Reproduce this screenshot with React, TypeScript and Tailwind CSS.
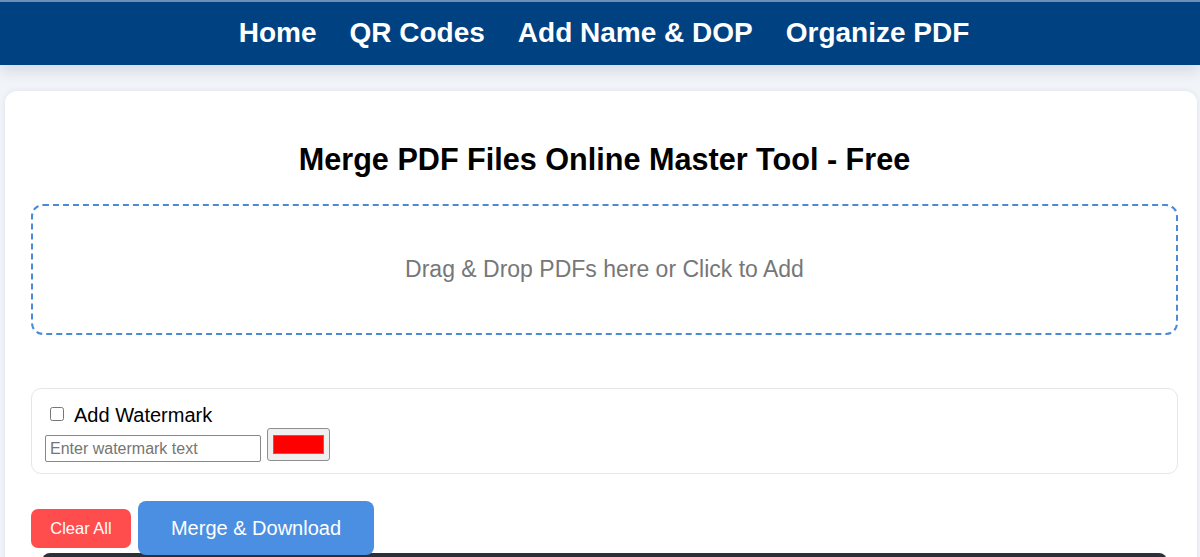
import React from 'react';

const navLinks = ['Home', 'QR Codes', 'Add Name & DOP', 'Organize PDF'];

export default function App() {
  return (
    <div className="min-h-screen bg-[#f1f4f8] font-['Liberation_Sans',Arial,sans-serif] overflow-hidden">
      {/* Header */}
      <header className="relative z-10 h-[65px] bg-[#004182] border-t-2 border-[#6f8fb8] shadow-[0_6px_14px_rgba(0,40,90,0.12)] flex items-center justify-center gap-[33px] pl-[8px]">
        {navLinks.map(link => (
          <a key={link} href="#" className="text-white text-[28px] font-bold leading-none -mt-[1px]">
            {link}
          </a>
        ))}
      </header>

      {/* Main card */}
      <main className="mt-[26px] ml-[5px] mr-[3px] bg-white rounded-xl shadow-[0_0_6px_rgba(0,0,0,0.08)] pt-[50px] pl-[26px] pr-[19px] pb-10 h-[600px]">
        <h1 className="text-center text-[30.6px] font-bold text-black leading-[36px]">
          Merge PDF Files Online Master Tool - Free
        </h1>

        {/* Drop zone */}
        <div className="mt-[27px] h-[131px] border-2 border-dashed border-[#4a8ad6] rounded-xl flex items-center justify-center cursor-pointer">
          <p className="text-[23px] text-[#777777]">Drag &amp; Drop PDFs here or Click to Add</p>
        </div>

        {/* Watermark */}
        <div className="mt-[53px] h-[86px] border border-[#e6e6e6] rounded-[10px] pt-[14px] pl-[13px]">
          <label className="flex items-center h-[24px] ml-[5px] text-[20px] text-black">
            <input type="checkbox" className="w-[14px] h-[14px] mr-[10px] -mt-[2px]" />
            Add Watermark
          </label>
          <div className="flex items-end gap-[6px] mt-[1px]">
            <input
              type="text"
              placeholder="Enter watermark text"
              className="w-[216px] h-[27px] border border-[#888] rounded-[2px] px-[4px] text-[16px] placeholder:text-[#757575] outline-none"
            />
            <div className="w-[63px] h-[33px] border border-[#8f8f8f] rounded-[3px] bg-[#efefef] flex items-center justify-center mb-[1px]">
              <div className="w-[51px] h-[19px] bg-[#ff0000] border border-[#777]" />
            </div>
          </div>
        </div>

        {/* Buttons */}
        <div className="mt-[27px] flex items-center gap-[7px]">
          <button className="w-[100px] h-[39px] bg-[#ff4d4d] text-white text-[16.5px] rounded-[7px]">
            Clear All
          </button>
          <button className="w-[236px] h-[54px] bg-[#4a8fe2] text-white text-[20px] rounded-[8px]">
            Merge &amp; Download
          </button>
        </div>

        {/* File list */}
        <div className="-mt-[2px] mx-[11px] h-[120px] bg-[#2c3038] rounded-t-lg" />
      </main>
    </div>
  );
}
